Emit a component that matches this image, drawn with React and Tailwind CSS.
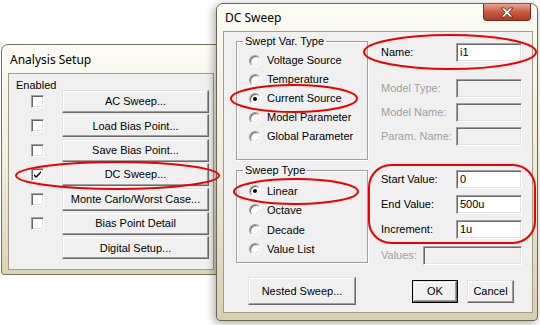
import React from 'react';

const ui = "font-['Liberation_Sans',Arial,sans-serif] text-[11px] text-black";

function Btn({ className = '', children }) {
    return (
        <div className={`flex items-center justify-center bg-[#f0f0f0] border border-t-[#e3e3e3] border-l-[#e3e3e3] border-r-[#696969] border-b-[#696969] shadow-[inset_-1px_-1px_0_#a0a0a0,inset_1px_1px_0_#ffffff] ${className}`}>
            {children}
        </div>
    );
}

function Check({ checked }) {
    return (
        <div className="w-[13px] h-[13px] bg-white border border-t-[#a0a0a0] border-l-[#a0a0a0] border-r-white border-b-white shadow-[inset_1px_1px_0_#696969,inset_-1px_-1px_0_#e3e3e3] flex items-center justify-center">
            {checked && (
                <svg width="9" height="9" viewBox="0 0 9 9">
                    <path d="M1 4 L3 6 L8 1 L8 3 L3 8 L1 6 Z" fill="#000" />
                </svg>
            )}
        </div>
    );
}

function Radio({ label, on, h }) {
    return (
        <div className={`flex items-center gap-[6px] ${h}`}>
            <span className="w-[12px] h-[12px] rounded-full bg-[#fdfdfd] border border-t-[#a0a0a0] border-l-[#a0a0a0] border-b-[#fff] border-r-[#fff] shadow-[inset_1px_1px_0_#696969,inset_-1px_-1px_0_#e3e3e3] flex items-center justify-center">
                {on && <span className="w-[4px] h-[4px] rounded-full bg-black" />}
            </span>
            <span>{label}</span>
        </div>
    );
}

function Field({ label, value, disabled, mt, w = 'w-[66px]', lw = 'w-[75px]' }) {
    return (
        <div className={`flex items-center ${mt}`}>
            <span className={`${lw} ${disabled ? 'text-[#a0a0a0]' : ''}`}>{label}</span>
            <div className={`${w} h-[19px] border border-t-[#a0a0a0] border-l-[#a0a0a0] border-b-white border-r-white shadow-[inset_1px_1px_0_#696969,inset_-1px_-1px_0_#e3e3e3] px-[3px] leading-[17px] ${disabled ? 'bg-[#f0f0f0]' : 'bg-white'}`}>
                {value}
            </div>
        </div>
    );
}

function Group({ title, children, className = '' }) {
    return (
        <fieldset className={`border border-[#a0a0a0] shadow-[inset_1px_1px_0_#fff,1px_1px_0_#fff] ${className}`}>
            <legend className="ml-[6px] px-[2px] leading-[13px]">{title}</legend>
            {children}
        </fieldset>
    );
}

const analysisRows = [
    ['AC Sweep...', false],
    ['Load Bias Point...', false],
    ['Save Bias Point...', false],
    ['DC Sweep...', true],
    ['Monte Carlo/Worst Case...', false],
    ['Bias Point Detail', false],
    ['Digital Setup...', null],
];

function AnalysisSetup() {
    return (
        <div className="absolute left-[1px] top-[44px] w-[222px] h-[231px] rounded-t-[7px] rounded-b-[3px] border border-[#77735f] bg-gradient-to-b from-[#fcfcf5] via-[#f1eedd] to-[#dcd4b6]">
            <div className="h-[28px] pl-[8px] pt-[7px] leading-[16px] text-[12px] font-['Noto_Sans',sans-serif] text-black">Analysis Setup</div>
            <div className={`ml-[6px] w-[206px] h-[197px] border border-[#a39d86] bg-[#f0f0f0] ${ui}`}>
                <div className="pl-[7px] mt-[5px] h-[12px] leading-[12px]">Enabled</div>
                <div className="flex flex-col gap-[1.4px] mt-[-1px]">
                    {analysisRows.map(([label, checked]) => (
                        <div key={label} className="flex items-center h-[23px]">
                            <div className="w-[53px] pl-[22px]">{checked !== null && <Check checked={checked} />}</div>
                            <Btn className="w-[147px] h-[23px]">{label}</Btn>
                        </div>
                    ))}
                </div>
            </div>
        </div>
    );
}

function DCSweep() {
    return (
        <div className="absolute left-[216px] top-[3px] w-[322px] h-[318px] rounded-t-[7px] rounded-b-[4px] border border-[#6b6654] bg-gradient-to-b from-[#fcfcf5] via-[#f0ecda] to-[#d8cfae] shadow-[-2px_2px_8px_rgba(0,0,0,0.35)]">
            <div className="h-[27px] flex items-start">
                <span className="pl-[8px] mt-[6px] leading-[16px] text-[12px] font-['Noto_Sans',sans-serif] text-black">DC Sweep</span>
                <div className="ml-auto mr-[6px] w-[48px] h-[17px] rounded-b-[4px] border border-t-0 border-[#7a2a1c] bg-gradient-to-b from-[#e7a592] via-[#c95a41] to-[#b03a22] flex items-center justify-center">
                    <svg width="14" height="11" viewBox="0 0 14 11">
                        <path d="M1 1 H4.5 L7 3.8 L9.5 1 H13 L8.8 5.5 L13 10 H9.5 L7 7.2 L4.5 10 H1 L5.2 5.5 Z" fill="#fff" stroke="#5a1d12" strokeWidth="0.8" strokeLinejoin="round" />
                    </svg>
                </div>
            </div>
            <div className={`ml-[6px] w-[310px] h-[282px] border border-[#a39d86] bg-[#f0f0f0] ${ui}`}>
                <div className="flex">
                    <div className="pl-[12px] w-[145px]">
                        <Group title="Swept Var. Type" className="mt-[3px] w-[132px]">
                            <div className="pl-[12px] pt-[3px] pb-[13px]">
                                <Radio label="Voltage Source" h="h-[19px]" />
                                <Radio label="Temperature" h="h-[19px]" />
                                <Radio label="Current Source" on h="h-[19px]" />
                                <Radio label="Model Parameter" h="h-[19px]" />
                                <Radio label="Global Parameter" h="h-[19px]" />
                            </div>
                        </Group>
                        <Group title="Sweep Type" className="mt-[4px] w-[132px]">
                            <div className="pl-[12px] pt-[4px] pb-[3px]">
                                <Radio label="Linear" on h="h-[19.5px]" />
                                <Radio label="Octave" h="h-[19.5px]" />
                                <Radio label="Decade" h="h-[19.5px]" />
                                <Radio label="Value List" h="h-[19.5px]" />
                            </div>
                        </Group>
                    </div>
                    <div className="ml-[12px] flex flex-col">
                        <Field label="Name:" value="i1" mt="mt-[11px]" />
                        <Field label="Model Type:" disabled mt="mt-[17px]" />
                        <Field label="Model Name:" disabled mt="mt-[5px]" />
                        <Field label="Param. Name:" disabled mt="mt-[5px]" />
                        <Field label="Start Value:" value="0" mt="mt-[24px]" />
                        <Field label="End Value:" value="500u" mt="mt-[6px]" />
                        <Field label="Increment:" value="1u" mt="mt-[6px]" />
                        <Field label="Values:" disabled mt="mt-[7px]" lw="w-[42px]" w="w-[99px]" />
                    </div>
                </div>
                <div className="flex items-center mt-[12px] pl-[24px]">
                    <Btn className="w-[108px] h-[28px]">Nested Sweep...</Btn>
                    <div className="ml-[56px] border border-black">
                        <Btn className="w-[44px] h-[21px]">OK</Btn>
                    </div>
                    <Btn className="ml-[9px] w-[47px] h-[23px]">Cancel</Btn>
                </div>
            </div>
        </div>
    );
}

export default function App() {
    return (
        <div className="relative w-[540px] h-[325px] bg-white overflow-hidden">
            <AnalysisSetup />
            <DCSweep />
            <svg className="absolute inset-0 pointer-events-none" width="540" height="325" viewBox="0 0 540 325">
                <g fill="none" stroke="#ee0000" strokeWidth="2">
                    <ellipse cx="117.5" cy="175.5" rx="101.5" ry="13.5" />
                    <ellipse cx="450" cy="52" rx="86" ry="17" />
                    <ellipse cx="294" cy="98.5" rx="63" ry="13.5" />
                    <ellipse cx="296" cy="191.5" rx="62" ry="12.5" />
                    <rect x="369" y="165" width="166" height="78" rx="22" />
                </g>
            </svg>
        </div>
    );
}
